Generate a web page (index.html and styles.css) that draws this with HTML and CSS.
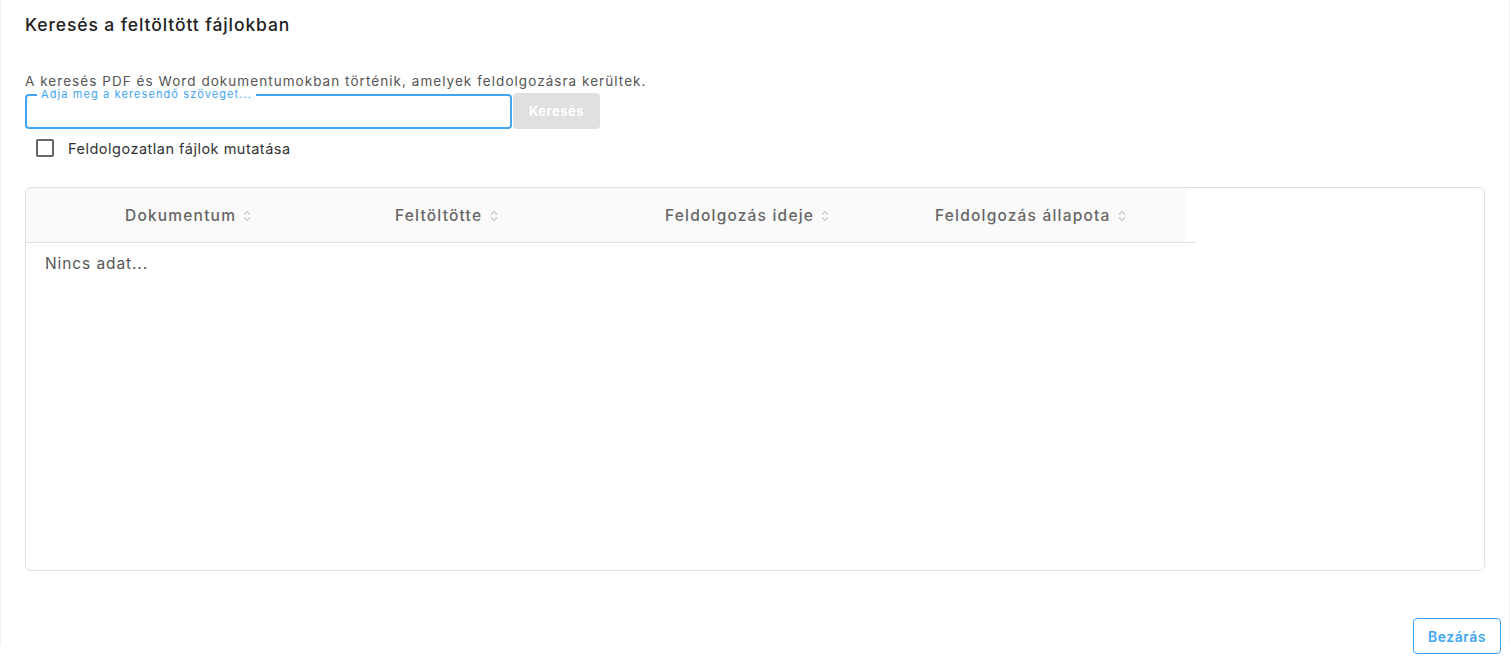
FILE: index.html
```html
<!DOCTYPE html>
<html>
  <head>
    <title>Keresés a feltöltött fájlokban</title>
    <link rel="stylesheet" href="styles.css">
  </head>
  <body>
    <div class="dialog">
      <h2 class="dialog-title">Keresés a feltöltött fájlokban</h2>

      <p class="hint">A keresés PDF és Word dokumentumokban történik, amelyek feldolgozásra kerültek.</p>

      <div class="search-row">
        <div class="search-field">
          <span class="search-label">Adja meg a keresendő szöveget...</span>
          <input class="search-input" type="text">
        </div>
        <button class="search-button" disabled>Keresés</button>
      </div>

      <label class="check-row">
        <span class="check-box"></span>
        <span class="check-text">Feldolgozatlan fájlok mutatása</span>
      </label>

      <div class="table">
        <div class="table-head-wrap">
          <div class="table-head">
            <div class="th">Dokumentum <span class="sort"></span></div>
            <div class="th">Feltöltötte <span class="sort"></span></div>
            <div class="th">Feldolgozás ideje <span class="sort"></span></div>
            <div class="th">Feldolgozás állapota <span class="sort"></span></div>
          </div>
        </div>
        <div class="empty">Nincs adat...</div>
      </div>
    </div>

    <div class="dialog-actions">
      <button class="close-button">Bezárás</button>
    </div>

    <script>
      // sort arrows, same for every column
      var arrows = '<svg width="8" height="12" viewBox="0 0 8 12"><path d="M1 4.5 4 1.5 7 4.5" fill="none" stroke="#c4c4c4" stroke-width="1.1"/><path d="M1 7.5 4 10.5 7 7.5" fill="none" stroke="#c4c4c4" stroke-width="1.1"/></svg>';
      document.querySelectorAll('.sort').forEach(function(el){
        el.innerHTML = arrows;
      });
    </script>
  </body>
</html>
```

FILE: styles.css
```css
html, body{
  margin: 0;
  background-color: white;
  font-family: Inter, "Noto Sans", sans-serif;
  color: #333;
}
.dialog{
  height: 645px;
  box-sizing: border-box;
  padding: 0 24px;
  border-left: 1px solid #f2f2f2;
  border-right: 1px solid #f2f2f2;
  overflow: hidden;
}
.dialog-title{
  margin: 0;
  padding-top: 13px;
  font-size: 17.5px;
  font-weight: 500;
  color: #222;
  line-height: 24px;
  letter-spacing: 0.9px;
}
.hint{
  margin: 36px 0 0 0;
  font-size: 13.5px;
  line-height: 16px;
  color: #555;
  letter-spacing: 1.05px;
}
.search-row{
  display: flex;
  align-items: flex-start;
  margin-top: 5px;
}
.search-field{
  position: relative;
  width: 487px;
}
.search-input{
  display: block;
  width: 100%;
  height: 35px;
  box-sizing: border-box;
  border: 2px solid #42a5f5;
  border-radius: 4px;
  outline: none;
}
.search-label{
  position: absolute;
  top: -6px;
  left: 12px;
  padding: 0 4px;
  background-color: white;
  font-size: 11px;
  line-height: 12px;
  color: #42a5f5;
  letter-spacing: 1.1px;
}
.search-button{
  margin-left: 1px;
  width: 87px;
  height: 36px;
  margin-top: -1px;
  border: none;
  border-radius: 4px;
  background-color: #e0e0e0;
  color: white;
  font-family: inherit;
  font-size: 13px;
  font-weight: 700;
  letter-spacing: 0.5px;
}
.check-row{
  display: flex;
  align-items: center;
  margin-top: 10px;
  padding-left: 11px;
}
.check-box{
  width: 14px;
  height: 14px;
  border: 2px solid #666;
  border-radius: 2px;
}
.check-text{
  margin-left: 14px;
  font-size: 14.5px;
  color: #333;
  letter-spacing: 0.5px;
}
.table{
  margin-top: 30px;
  height: 384px;
  box-sizing: border-box;
  border: 1px solid #e0e0e0;
  border-radius: 6px;
}
.table-head-wrap{
  width: 1170px;
  border-bottom: 1px solid #e0e0e0;
}
.table-head{
  width: 1160px;
  height: 54px;
  background-color: #fafafa;
  border-top-left-radius: 6px;
  display: grid;
  grid-template-columns: 270px 270px 270px 350px;
  align-items: center;
}
.th{
  padding-left: 99px;
  font-size: 15.5px;
  font-weight: 500;
  color: #666;
  white-space: nowrap;
  letter-spacing: 1.2px;
}
.sort{
  margin-left: 2px;
}
.sort svg{
  vertical-align: -1px;
}
.empty{
  padding: 11px 19px;
  font-size: 15.5px;
  color: #555;
  letter-spacing: 0.9px;
}
.dialog-actions{
  display: flex;
  justify-content: flex-end;
  padding-right: 9px;
  margin-top: -27px;
}
.close-button{
  width: 88px;
  height: 36px;
  background-color: white;
  border: 1px solid #42a5f5;
  border-radius: 4px;
  color: #42a5f5;
  font-family: inherit;
  font-size: 14px;
  font-weight: 600;
  letter-spacing: 0.5px;
}
```
